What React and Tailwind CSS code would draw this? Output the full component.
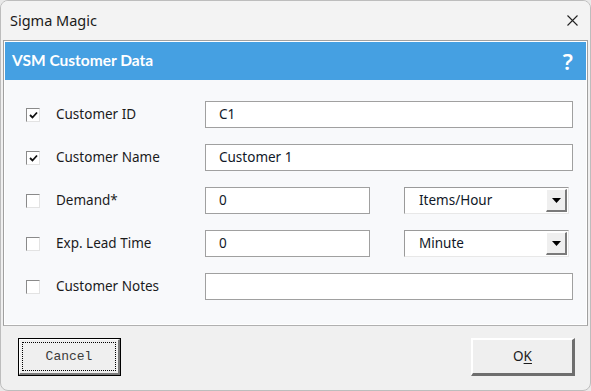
function Check({ checked }) {
  return (
    <div className="w-[14px] h-[14px] bg-white border border-t-[#8a8a8a] border-l-[#8a8a8a] border-r-[#e3e3e3] border-b-[#e3e3e3] flex items-center justify-center">
      {checked && (
        <svg width="9" height="8" viewBox="0 0 9 8">
          <path d="M1 4 L3.5 6.5 L8 1.5" fill="none" stroke="#111" strokeWidth="1.8" />
        </svg>
      )}
    </div>
  );
}

function Field({ value, className }) {
  return (
    <div className={`h-[27px] bg-white border border-[#a0a0a0] flex items-center pl-[13px] text-[#101828] ${className}`}>
      {value}
    </div>
  );
}

function Dropdown({ value }) {
  return (
    <div className="w-[165px] h-[27px] bg-white border border-t-[#9a9a9a] border-l-[#9a9a9a] border-r-[#e8e8e8] border-b-[#e8e8e8] flex items-center pl-[14px] pr-[1px] text-[#101828]">
      <span className="flex-1">{value}</span>
      <div className="w-[21px] h-[23px] bg-[#efefef] border-t border-l border-white border-r-2 border-b-2 border-r-[#7a7a7a] border-b-[#7a7a7a] flex items-center justify-center">
        <svg width="9" height="5" viewBox="0 0 9 5"><path d="M0 0 H9 L4.5 5 Z" fill="#000" /></svg>
      </div>
    </div>
  );
}

function Row({ checked, label, children }) {
  return (
    <div className="flex items-center h-[27px]">
      <div className="w-[30px]"><Check checked={checked} /></div>
      <div className="w-[149px] text-[#1b1b1b]">{label}</div>
      {children}
    </div>
  );
}

export default function App() {
  return (
    <div className="w-[591px] h-[391px] bg-[#e9e9e9]" style={{ fontFamily: '"Noto Sans", "Open Sans", sans-serif' }}>
      <div className="w-full h-full flex flex-col bg-[#f0f0f0] border border-[#bdbdbd] rounded-[8px] overflow-hidden text-[13.5px]">
        {/* title bar */}
        <div className="h-[39px] shrink-0 bg-[#f3f3f3] flex items-center justify-between pl-[9px] pr-[12px]">
          <span className="text-[14.5px] text-[#1a1a1a]">Sigma Magic</span>
          <svg width="11" height="11" viewBox="0 0 11 11">
            <path d="M0.5 0.5 L10.5 10.5 M10.5 0.5 L0.5 10.5" stroke="#222" strokeWidth="1.1" />
          </svg>
        </div>

        {/* frame */}
        <div className="mx-[2px] border border-[#a0a0a0] border-b-[#b0b0b0]">
          <div className="border border-white bg-[#f8f9fb]">
            <div className="h-[38px] bg-[#45a0e2] flex items-center justify-between pl-[7px] pr-[13px] text-white">
              <span className="font-bold text-[15.5px]" style={{ fontFamily: 'Lato, "Noto Sans", sans-serif' }}>VSM Customer Data</span>
              <span className="font-semibold text-[22px] leading-none">?</span>
            </div>
            <div className="pl-[21px] pt-[21px] pb-[24px] flex flex-col gap-[16px]">
              <Row checked label="Customer ID"><Field value="C1" className="w-[368px]" /></Row>
              <Row checked label="Customer Name"><Field value="Customer 1" className="w-[368px]" /></Row>
              <Row label="Demand*">
                <Field value="0" className="w-[165px]" />
                <div className="w-[34px]" />
                <Dropdown value="Items/Hour" />
              </Row>
              <Row label="Exp. Lead Time">
                <Field value="0" className="w-[165px]" />
                <div className="w-[34px]" />
                <Dropdown value="Minute" />
              </Row>
              <Row label="Customer Notes"><Field value="" className="w-[368px]" /></Row>
            </div>
          </div>
        </div>

        {/* footer */}
        <div className="flex-1 flex items-start justify-between pt-[12px] pl-[17px] pr-[15px]">
          <div className="w-[103px] h-[38px] border border-black bg-[#efefef]">
            <div className="w-full h-full border-t border-l border-white border-r-2 border-b-2 border-r-[#7a7a7a] border-b-[#7a7a7a] p-[2px]">
              <div className="w-full h-full border border-dotted border-black flex items-center justify-center text-[13px] text-[#3a3a3a]" style={{ fontFamily: '"Liberation Mono", monospace' }}>
                Cancel
              </div>
            </div>
          </div>
          <div className="w-[104px] h-[38px] bg-[#efefef] border-t-2 border-l-2 border-white border-r-[3px] border-b-[3px] border-r-[#6e6e6e] border-b-[#6e6e6e] flex items-center justify-center text-[#1b1b1b]">
            <span>O<span className="underline underline-offset-2">K</span></span>
          </div>
        </div>
      </div>
    </div>
  );
}
